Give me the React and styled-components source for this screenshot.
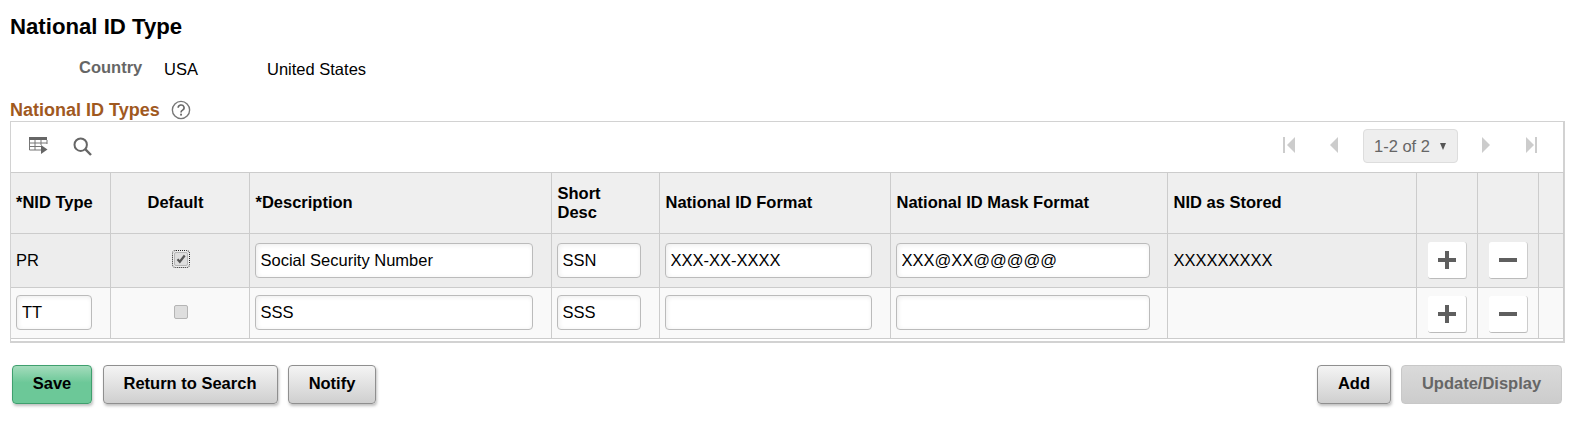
import React from "react";
import styled, { createGlobalStyle } from "styled-components";

const GlobalStyle = createGlobalStyle`
  html, body {
    margin: 0;
    background: #fff;
    font-family: "Liberation Sans", Arial, sans-serif;
    color: #000;
  }
`;

const Page = styled.div`
  width: 1590px;
  height: 431px;
  overflow: hidden;
  padding: 14px 25px 0 10px;
  box-sizing: border-box;
`;

const Title = styled.h1`
  margin: 0;
  font-size: 22.2px;
  line-height: 26px;
  font-weight: bold;
`;

const CountryRow = styled.div`
  display: flex;
  align-items: baseline;
  height: 24px;
  margin-top: 20px;
  padding-left: 69px;
  font-size: 16.5px;
`;

const FieldLabel = styled.span`
  width: 85px;
  font-weight: bold;
  color: #666;
  position: relative;
  top: -2px;
`;

const FieldValue = styled.span`
  width: ${(p) => p.$width}px;
`;

const SectionHead = styled.div`
  display: flex;
  align-items: center;
  gap: 11px;
  height: 22px;
  margin-top: 15px;
  font-size: 18px;
  font-weight: bold;
  color: #a0591f;
`;

const GridBox = styled.div`
  border: 1px solid #d2d2d2;
  border-width: 1px 2px 2px 1px;
  padding-bottom: 2px;
  box-sizing: border-box;
  width: 1555px;
`;

const Toolbar = styled.div`
  display: flex;
  align-items: center;
  justify-content: space-between;
  height: 50px;
  padding: 0 25px 2px 18px;
  box-sizing: border-box;
`;

const ToolGroup = styled.div`
  display: flex;
  align-items: center;
  gap: ${(p) => p.$gap}px;
`;

const PageSelect = styled.div`
  display: flex;
  align-items: center;
  justify-content: space-between;
  width: 95px;
  height: 34px;
  padding: 0 11px 0 10px;
  box-sizing: border-box;
  background: #eee;
  border: 1px solid #ddd;
  border-radius: 4px;
  font-size: 16.5px;
  color: #666;
`;

const Caret = styled.span`
  width: 0;
  height: 0;
  border-left: 3.5px solid transparent;
  border-right: 3.5px solid transparent;
  border-top: 7px solid #555;
`;

const Table = styled.table`
  border-collapse: collapse;
  table-layout: fixed;
  width: 1552px;
  font-size: 16.5px;
`;

const HeadCell = styled.th`
  height: 61px;
  padding: 0 ${(p) => (p.$center ? 14 : 5)}px 1px ${(p) => (p.$first ? 5 : 6)}px;
  box-sizing: border-box;
  background: #efefef;
  border: 1px solid #ccc;
  border-left-width: ${(p) => (p.$first ? 0 : 1)}px;
  font-size: 16.5px;
  line-height: 19px;
  font-weight: bold;
  text-align: ${(p) => (p.$center ? "center" : "left")};
`;

const Row = styled.tr`
  height: ${(p) => p.$height}px;
  background: ${(p) => p.$bg};
`;

const Cell = styled.td`
  padding: 0 5px ${(p) => p.$lift || 0}px ${(p) => (p.$text ? 6 : 5)}px;
  box-sizing: border-box;
  border: 1px solid #ccc;
  border-left-width: ${(p) => (p.$first ? 0 : 1)}px;
  text-align: ${(p) => (p.$center ? "center" : "left")};
`;

const TextInput = styled.input`
  display: block;
  width: ${(p) => p.$width}px;
  height: 35px;
  padding: 0 5px;
  box-sizing: border-box;
  background: #fff;
  border: 1px solid #bbb;
  border-radius: 4px;
  box-shadow: inset 1px 1px 5px rgba(0, 0, 0, 0.08);
  font-family: inherit;
  font-size: 16.5px;
  color: #000;
  outline: none;
`;

const CheckBox = styled.span`
  display: inline-flex;
  align-items: center;
  justify-content: center;
  width: 12px;
  height: 12px;
  margin: 0 0 ${(p) => (p.$focused ? 4 : 2)}px 2px;
  vertical-align: middle;
  background: #dedede;
  border: 1px solid #b5b5b5;
  border-radius: 2px;
  outline: ${(p) => (p.$focused ? "1px dotted #222" : "none")};
  outline-offset: 1px;
`;

const IconButton = styled.button`
  display: flex;
  align-items: center;
  justify-content: center;
  width: 39px;
  height: 37px;
  margin: ${(p) => p.$drop || 0}px 0 0 6px;
  padding: 0;
  background: #fff;
  border: none;
  border-right: 1px solid #ccc;
  border-bottom: 1px solid #bbb;
  border-radius: 3px;
`;

const Footer = styled.div`
  display: flex;
  justify-content: space-between;
  width: 1552px;
  margin-top: 22px;
  padding-left: 2px;
  box-sizing: border-box;
`;

const ButtonGroup = styled.div`
  display: flex;
  gap: ${(p) => p.$gap}px;
`;

const ActionButton = styled.button`
  width: ${(p) => p.$width}px;
  height: 39px;
  padding: 0 0 3px;
  border: 1px solid #8f8f8f;
  border-radius: 4px;
  background: linear-gradient(#f4f4f4, #cfcfcf);
  box-shadow: 1px 2px 3px rgba(0, 0, 0, 0.25);
  font-family: inherit;
  font-size: 16.5px;
  font-weight: bold;
  color: #000;
`;

const SaveButton = styled(ActionButton)`
  border-color: #3f9f6e;
  background: linear-gradient(#a4dcbc, #6cc898 45%);
`;

const DisabledButton = styled(ActionButton)`
  border-color: #c8c8c8;
  background: linear-gradient(#dadada, #cccccc);
  box-shadow: none;
  color: #666;
`;

const PagerSvg = styled.svg`
  margin: 0 ${(p) => p.$after || 0}px 2px ${(p) => p.$before || 0}px;
`;

const HelpIcon = () => (
  <svg width="20" height="20" viewBox="0 0 19 19">
    <circle cx="9.5" cy="9.5" r="8.2" fill="none" stroke="#777" strokeWidth="1.3" />
    <path d="M6.8 7.4a2.8 2.6 0 1 1 4.2 2.2c-1 .6-1.5 1.1-1.5 2.3" fill="none" stroke="#666" strokeWidth="1.5" />
    <rect x="8.7" y="13" width="1.7" height="1.8" fill="#666" />
  </svg>
);

const GridIcon = () => (
  <svg width="19" height="18" viewBox="0 0 19 18">
    <rect x="0" y="0" width="18" height="3" fill="#666" />
    <path d="M0.5 3v10h12M6 3v10M12 3v5M0 6h18M0 9.500h12M18 3v4" fill="none" stroke="#777" strokeWidth="1" />
    <path d="M12 8l6.500 4.500L12 17z" fill="#666" />
  </svg>
);

const SearchIcon = () => (
  <svg width="19" height="19" viewBox="0 0 19 19">
    <circle cx="7.700" cy="7.700" r="6.200" fill="none" stroke="#666" strokeWidth="2" />
    <path d="M12.200 12.200l5.800 5.800" stroke="#666" strokeWidth="2.400" />
  </svg>
);

const PagerIcon = ({ dir, bar, before, after }) => (
  <PagerSvg width="13" height="16" viewBox="0 0 13 16" $before={before} $after={after}>
    {dir === "left" ? (
      <path d={`M${bar ? 12 : 10} 0v16L${bar ? 4 : 2} 8z`} fill="#ccc" />
    ) : (
      <path d="M1 0v16l8-8z" fill="#ccc" />
    )}
    {bar && <rect x={dir === "left" ? 0 : 10} y="0" width="2" height="16" fill="#ccc" />}
  </PagerSvg>
);

const CheckMark = () => (
  <svg width="10" height="10" viewBox="0 0 10 10">
    <path d="M1.500 5.200l2.300 2.500L8.700 1.500" fill="none" stroke="#555" strokeWidth="2.200" />
  </svg>
);

const PlusIcon = () => (
  <svg width="18" height="18" viewBox="0 0 18 18">
    <path d="M7 0h4v7h7v4h-7v7H7v-7H0V7h7z" fill="#5f5f5f" />
  </svg>
);

const MinusIcon = () => (
  <svg width="18" height="4" viewBox="0 0 18 4">
    <rect width="18" height="4" fill="#5f5f5f" />
  </svg>
);

const columns = [99, 139, 302, 108, 231, 277, 249, 61, 61, 25];

const rows = [
  {
    bg: "#ededed",
    height: 54,
    lift: 0,
    drop: 0,
    nid: "PR",
    checked: true,
    desc: "Social Security Number",
    short: "SSN",
    format: "XXX-XX-XXXX",
    mask: "XXX@XX@@@@@",
    stored: "XXXXXXXXX",
  },
  {
    bg: "#f9f9f9",
    height: 51,
    lift: 2,
    drop: 3,
    nid: "TT",
    editable: true,
    desc: "SSS",
    short: "SSS",
    format: "",
    mask: "",
    stored: "",
  },
];

export default function App() {
  return (
    <Page>
      <GlobalStyle />
      <Title>National ID Type</Title>
      <CountryRow>
        <FieldLabel>Country</FieldLabel>
        <FieldValue $width={103}>USA</FieldValue>
        <FieldValue $width={120}>United States</FieldValue>
      </CountryRow>
      <SectionHead>
        National ID Types
        <HelpIcon />
      </SectionHead>
      <GridBox>
        <Toolbar>
          <ToolGroup $gap={25}>
            <GridIcon />
            <SearchIcon />
          </ToolGroup>
          <ToolGroup $gap={22}>
            <PagerIcon dir="left" bar after={10} />
            <PagerIcon dir="left" />
            <PageSelect>
              1-2 of 2
              <Caret />
            </PageSelect>
            <PagerIcon dir="right" before={1} />
            <PagerIcon dir="right" bar before={9} />
          </ToolGroup>
        </Toolbar>
        <Table>
          <colgroup>
            {columns.map((w, i) => (
              <col key={i} style={{ width: w }} />
            ))}
          </colgroup>
          <thead>
            <tr>
              <HeadCell $first>*NID Type</HeadCell>
              <HeadCell $center>Default</HeadCell>
              <HeadCell>*Description</HeadCell>
              <HeadCell>
                Short
                <br />
                Desc
              </HeadCell>
              <HeadCell>National ID Format</HeadCell>
              <HeadCell>National ID Mask Format</HeadCell>
              <HeadCell>NID as Stored</HeadCell>
              <HeadCell />
              <HeadCell />
              <HeadCell />
            </tr>
          </thead>
          <tbody>
            {rows.map((row) => (
              <Row key={row.nid} $bg={row.bg} $height={row.height}>
                <Cell $first $lift={row.lift}>
                  {row.editable ? <TextInput $width={76} readOnly value={row.nid} /> : row.nid}
                </Cell>
                <Cell $center $lift={row.lift}>
                  <CheckBox $focused={row.checked}>{row.checked && <CheckMark />}</CheckBox>
                </Cell>
                <Cell $lift={row.lift}>
                  <TextInput $width={278} readOnly value={row.desc} />
                </Cell>
                <Cell $lift={row.lift}>
                  <TextInput $width={84} readOnly value={row.short} />
                </Cell>
                <Cell $lift={row.lift}>
                  <TextInput $width={207} readOnly value={row.format} />
                </Cell>
                <Cell $lift={row.lift}>
                  <TextInput $width={254} readOnly value={row.mask} />
                </Cell>
                <Cell $text>{row.stored}</Cell>
                <Cell>
                  <IconButton aria-label="Add row" $drop={row.drop}>
                    <PlusIcon />
                  </IconButton>
                </Cell>
                <Cell>
                  <IconButton aria-label="Delete row" $drop={row.drop}>
                    <MinusIcon />
                  </IconButton>
                </Cell>
                <Cell />
              </Row>
            ))}
          </tbody>
        </Table>
      </GridBox>
      <Footer>
        <ButtonGroup $gap={10.500}>
          <SaveButton $width={80}>Save</SaveButton>
          <ActionButton $width={175}>Return to Search</ActionButton>
          <ActionButton $width={88}>Notify</ActionButton>
        </ButtonGroup>
        <ButtonGroup $gap={10}>
          <ActionButton $width={74}>Add</ActionButton>
          <DisabledButton $width={161}>Update/Display</DisabledButton>
        </ButtonGroup>
      </Footer>
    </Page>
  );
}
